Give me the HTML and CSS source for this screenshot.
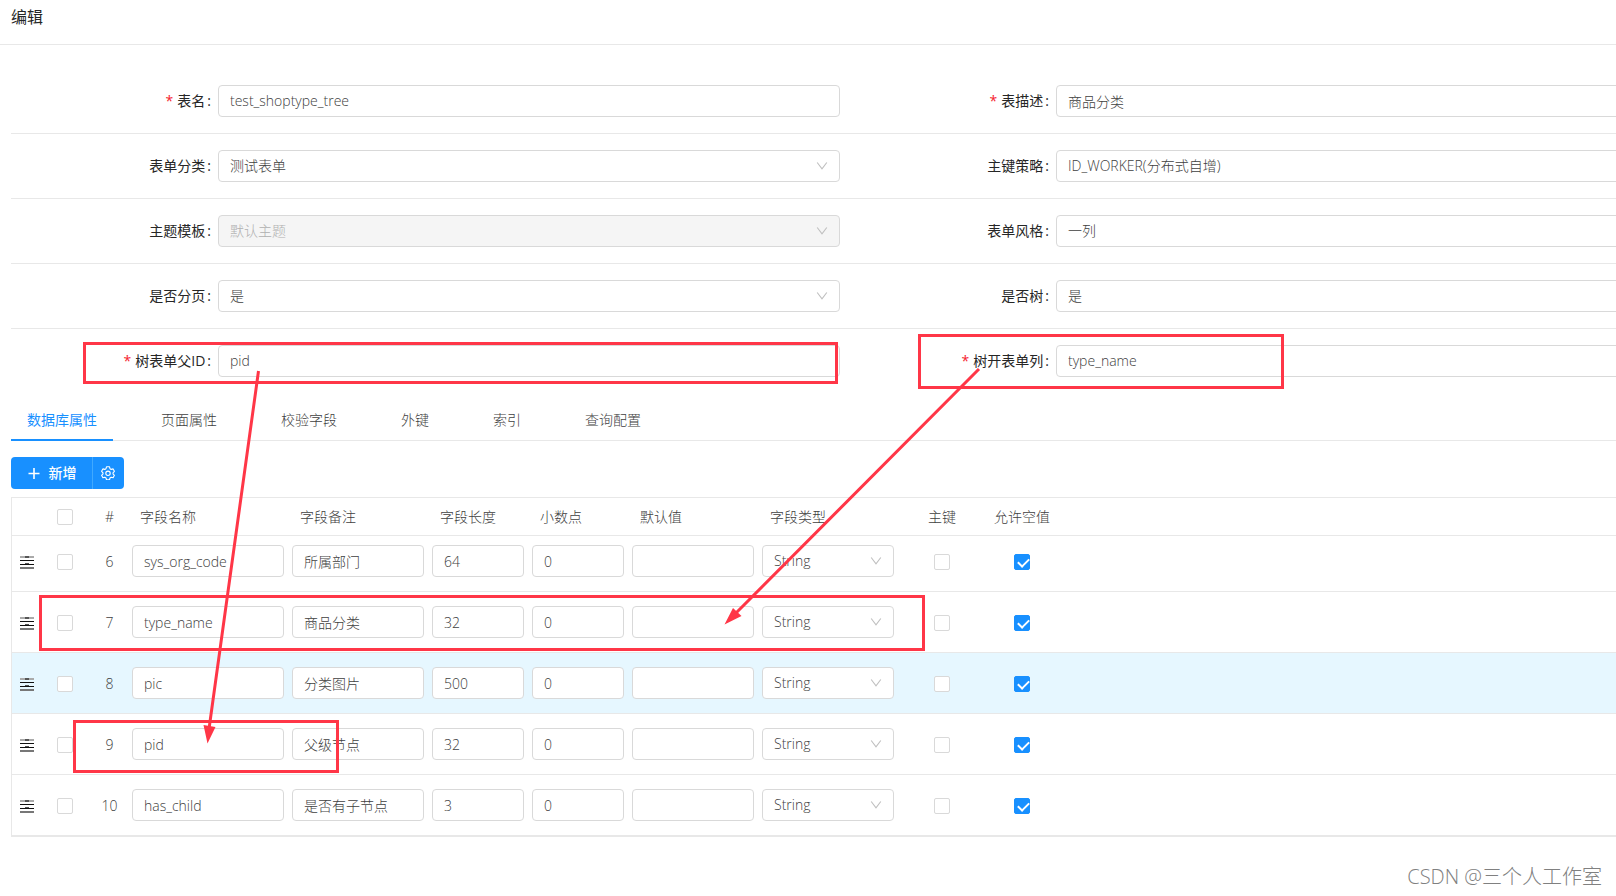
FILE: index.html
```html
<!DOCTYPE html>
<html lang="zh-CN">
<head>
<meta charset="utf-8">
<title>编辑</title>
<link rel="stylesheet" href="styles.css">
</head>
<body>
<svg class="sprite" aria-hidden="true">
  <symbol id="down" viewBox="0 0 12 12"><path d="M1.200 2.500 6 8.800 10.800 2.500" fill="none" stroke="currentColor" stroke-width="1.100"/></symbol>
  <symbol id="drag" viewBox="0 0 14 14"><path d="M0 2h14" stroke="#aaa" stroke-width="2"/><path d="M5 2h4M5 9h4" stroke="#555" stroke-width="2"/><path d="M0 5.500h14M0 9.500h14" stroke="#111"/><path d="M0 13h14" stroke="#777" stroke-width="2"/></symbol>
</svg>
<div class="page">
  <header class="title-bar"><h1 class="title">编辑</h1></header>

  <form class="form">
    <div class="form-row">
      <div class="field"><label class="label required" for="f1">表名</label><input class="control" id="f1" value="test_shoptype_tree"></div>
      <div class="field"><label class="label required" for="f2">表描述</label><input class="control" id="f2" value="商品分类"></div>
    </div>
    <div class="form-row">
      <div class="field"><label class="label" for="f3">表单分类</label><span class="select"><select class="control" id="f3"><option>测试表单</option></select><svg class="chevron"><use href="#down"/></svg></span></div>
      <div class="field"><label class="label" for="f4">主键策略</label><span class="select"><select class="control" id="f4"><option>ID_WORKER(分布式自增)</option></select><svg class="chevron"><use href="#down"/></svg></span></div>
    </div>
    <div class="form-row">
      <div class="field"><label class="label" for="f5">主题模板</label><span class="select"><select class="control" id="f5" disabled><option>默认主题</option></select><svg class="chevron"><use href="#down"/></svg></span></div>
      <div class="field"><label class="label" for="f6">表单风格</label><span class="select"><select class="control" id="f6"><option>一列</option></select><svg class="chevron"><use href="#down"/></svg></span></div>
    </div>
    <div class="form-row">
      <div class="field"><label class="label" for="f7">是否分页</label><span class="select"><select class="control" id="f7"><option>是</option></select><svg class="chevron"><use href="#down"/></svg></span></div>
      <div class="field"><label class="label" for="f8">是否树</label><span class="select"><select class="control" id="f8"><option>是</option></select><svg class="chevron"><use href="#down"/></svg></span></div>
    </div>
    <div class="form-row">
      <div class="field"><label class="label required" for="f9">树表单父ID</label><input class="control" id="f9" value="pid"></div>
      <div class="field"><label class="label required" for="f10">树开表单列</label><input class="control" id="f10" value="type_name"></div>
    </div>
  </form>

  <nav class="tabs" role="tablist">
    <button class="tab active" role="tab" aria-selected="true">数据库属性</button>
    <button class="tab" role="tab">页面属性</button>
    <button class="tab" role="tab">校验字段</button>
    <button class="tab" role="tab">外键</button>
    <button class="tab" role="tab">索引</button>
    <button class="tab" role="tab">查询配置</button>
  </nav>

  <div class="toolbar">
    <button class="btn add"><svg class="icon" viewBox="0 0 14 14"><path d="M7 2v11M1.500 7.500h11" stroke="currentColor" stroke-width="1.600"/></svg>新增</button>
    <button class="btn gear" aria-label="设置"><svg class="icon" viewBox="0 0 14 14" fill="none" stroke="currentColor" stroke-width="1.100" stroke-linejoin="round"><path d="M5.500.800h3l.5 1.900 1.200.7 1.900-.5 1.300 2.400-1.400 1.500v1l1.400 1.500-1.300 2.400-1.900-.5-1.200.7-.5 1.900h-3L5 11.900l-1.200-.7-1.900.5L.6 9.300 2 7.800v-1L.6 5.300l1.300-2.400 1.900.5L5 2.700z"/><circle cx="7" cy="7.300" r="2.200"/></svg></button>
  </div>

  <table class="grid">
    <colgroup><col class="c-drag"><col class="c-check"><col class="c-num"><col class="c-name"><col class="c-remark"><col class="c-len"><col class="c-len"><col class="c-default"><col class="c-remark"><col class="c-pk"><col class="c-null"><col></colgroup>
    <thead>
      <tr><th></th><th class="mid"><input type="checkbox" class="box" aria-label="全选"></th><th class="num">#</th><th>字段名称</th><th>字段备注</th><th>字段长度</th><th>小数点</th><th>默认值</th><th>字段类型</th><th class="mid">主键</th><th class="mid">允许空值</th><th></th></tr>
    </thead>
    <tbody>
      <tr class="first">
        <td class="mid"><svg class="drag"><use href="#drag"/></svg></td><td class="mid"><input type="checkbox" class="box" aria-label="选择"></td><td class="num">6</td>
        <td><input class="control" aria-label="字段名称" value="sys_org_code"></td><td><input class="control" aria-label="字段备注" value="所属部门"></td><td><input class="control" aria-label="字段长度" value="64"></td><td><input class="control" aria-label="小数点" value="0"></td><td><input class="control" aria-label="默认值"></td>
        <td><span class="select"><select class="control" aria-label="字段类型"><option>String</option></select><svg class="chevron"><use href="#down"/></svg></span></td>
        <td class="mid"><input type="checkbox" class="box" aria-label="主键"></td><td class="mid"><input type="checkbox" class="box" aria-label="允许空值" checked></td><td></td>
      </tr>
      <tr>
        <td class="mid"><svg class="drag"><use href="#drag"/></svg></td><td class="mid"><input type="checkbox" class="box" aria-label="选择"></td><td class="num">7</td>
        <td><input class="control" aria-label="字段名称" value="type_name"></td><td><input class="control" aria-label="字段备注" value="商品分类"></td><td><input class="control" aria-label="字段长度" value="32"></td><td><input class="control" aria-label="小数点" value="0"></td><td><input class="control" aria-label="默认值"></td>
        <td><span class="select"><select class="control" aria-label="字段类型"><option>String</option></select><svg class="chevron"><use href="#down"/></svg></span></td>
        <td class="mid"><input type="checkbox" class="box" aria-label="主键"></td><td class="mid"><input type="checkbox" class="box" aria-label="允许空值" checked></td><td></td>
      </tr>
      <tr class="hover">
        <td class="mid"><svg class="drag"><use href="#drag"/></svg></td><td class="mid"><input type="checkbox" class="box" aria-label="选择"></td><td class="num">8</td>
        <td><input class="control" aria-label="字段名称" value="pic"></td><td><input class="control" aria-label="字段备注" value="分类图片"></td><td><input class="control" aria-label="字段长度" value="500"></td><td><input class="control" aria-label="小数点" value="0"></td><td><input class="control" aria-label="默认值"></td>
        <td><span class="select"><select class="control" aria-label="字段类型"><option>String</option></select><svg class="chevron"><use href="#down"/></svg></span></td>
        <td class="mid"><input type="checkbox" class="box" aria-label="主键"></td><td class="mid"><input type="checkbox" class="box" aria-label="允许空值" checked></td><td></td>
      </tr>
      <tr>
        <td class="mid"><svg class="drag"><use href="#drag"/></svg></td><td class="mid"><input type="checkbox" class="box" aria-label="选择"></td><td class="num">9</td>
        <td><input class="control" aria-label="字段名称" value="pid"></td><td><input class="control" aria-label="字段备注" value="父级节点"></td><td><input class="control" aria-label="字段长度" value="32"></td><td><input class="control" aria-label="小数点" value="0"></td><td><input class="control" aria-label="默认值"></td>
        <td><span class="select"><select class="control" aria-label="字段类型"><option>String</option></select><svg class="chevron"><use href="#down"/></svg></span></td>
        <td class="mid"><input type="checkbox" class="box" aria-label="主键"></td><td class="mid"><input type="checkbox" class="box" aria-label="允许空值" checked></td><td></td>
      </tr>
      <tr>
        <td class="mid"><svg class="drag"><use href="#drag"/></svg></td><td class="mid"><input type="checkbox" class="box" aria-label="选择"></td><td class="num">10</td>
        <td><input class="control" aria-label="字段名称" value="has_child"></td><td><input class="control" aria-label="字段备注" value="是否有子节点"></td><td><input class="control" aria-label="字段长度" value="3"></td><td><input class="control" aria-label="小数点" value="0"></td><td><input class="control" aria-label="默认值"></td>
        <td><span class="select"><select class="control" aria-label="字段类型"><option>String</option></select><svg class="chevron"><use href="#down"/></svg></span></td>
        <td class="mid"><input type="checkbox" class="box" aria-label="主键"></td><td class="mid"><input type="checkbox" class="box" aria-label="允许空值" checked></td><td></td>
      </tr>
    </tbody>
  </table>

  <footer class="watermark">CSDN @三个人工作室</footer>

  <svg class="marks" width="1616" height="896" aria-hidden="true">
    <g fill="none" stroke="#ff3647" stroke-width="3">
      <rect x="84.500" y="343.500" width="752" height="39"/>
      <rect x="919.500" y="335.500" width="363" height="52"/>
      <rect x="40.500" y="596.500" width="883" height="53"/>
      <rect x="74.500" y="721.500" width="263" height="50"/>
      <path d="M258.500 371 209 729M979 369 736 613"/>
    </g>
    <path fill="#ff3647" d="M203.500 725 215.500 727 207.500 743.500zM733 608 741.500 616 724.500 624.500z"/>
  </svg>
</div>
</body>
</html>
```
FILE: styles.css
```css
* { box-sizing: border-box; }

body {
  margin: 0;
  background: #fff;
  color: #404040;
  font: 300 14px/20px "Open Sans", "Noto Sans CJK SC", sans-serif;
  overflow-x: hidden;
}

input, select, button { font: inherit; color: inherit; }

.sprite { position: absolute; width: 0; height: 0; }

.page { position: relative; min-height: 100vh; overflow: hidden; }

.title-bar { height: 45px; padding: 5px 11px; border-bottom: 1px solid #e8e8e8; }
.title { margin: 0; font-size: 16px; line-height: 24px; font-weight: 400; color: #262626; }

/* The form runs past the right edge of the window */
.form { margin: 24px -71px 0 11px; }
.form-row { display: grid; grid-template-columns: 1fr 1fr; padding: 16px 0; border-bottom: 1px solid #e8e8e8; }
.form-row:last-child { border-bottom: 0; }
.field { display: flex; align-items: center; padding-right: 9px; }
.label { width: 207px; padding-right: 7px; text-align: right; color: #262626; font-weight: 400; }
.label::after { content: ":"; margin-left: 2px; }
.required::before { content: "*"; margin-right: 4px; color: #f5222d; }

.control {
  display: block;
  flex: 1;
  width: 100%;
  height: 32px;
  margin: 0;
  padding: 0 11px;
  border: 1px solid #d9d9d9;
  border-radius: 4px;
  background: #fff;
  appearance: none;
}
.control:disabled { background: #f5f5f5; color: #b0b0b0; opacity: 1; }
.form .control { padding-bottom: 1px; }
.select { position: relative; display: block; flex: 1; }
.chevron { position: absolute; right: 12px; top: 10px; width: 12px; height: 12px; color: #bfbfbf; pointer-events: none; }

.tabs { display: flex; gap: 32px; margin-left: 11px; border-bottom: 1px solid #e8e8e8; height: 48px; }
.tab { height: 48px; padding: 8px 16px 0; border: 0; border-bottom: 2px solid transparent; background: none; }
.active { color: #1890ff; border-bottom-color: #1890ff; font-weight: 400; }

.toolbar { display: flex; margin: 16px 0 8px 11px; }
.btn { display: flex; align-items: center; justify-content: center; height: 32px; padding: 0; border: 0; background: #1890ff; color: #fff; }
.add { width: 82px; gap: 8px; border-radius: 4px 0 0 4px; border-right: 1px solid #40a9ff; font-weight: 500; }
.gear { width: 31px; padding-right: 2px; border-radius: 0 4px 4px 0; }
.icon { width: 14px; height: 14px; }

.grid {
  width: calc(100% + 60px);
  margin-left: 11px;
  table-layout: fixed;
  border-collapse: separate;
  border-spacing: 0;
  border: 1px solid #e8e8e8;
}
.c-drag { width: 32px; }
.c-check { width: 42px; }
.c-num { width: 42px; }
.c-name { width: 160px; }
.c-remark { width: 140px; }
.c-len { width: 100px; }
.c-default { width: 130px; }
.c-pk { width: 88px; }
.c-null { width: 72px; }
.grid th { height: 38px; padding: 0 0 0 12px; border-bottom: 1px solid #e8e8e8; font-weight: inherit; text-align: left; white-space: nowrap; }
.grid td { height: 61px; padding: 14px 4px; border-bottom: 1px solid #e8e8e8; }
.first td { height: 56px; padding: 9px 4px 14px; }
.hover td { background: #e6f7ff; }
.grid .mid { padding-left: 0; padding-right: 0; text-align: center; }
.grid .num { padding-left: 5px; padding-right: 0; text-align: center; }
.grid td.mid, .grid td.num { padding-bottom: 12px; }
.drag { display: block; width: 14px; height: 14px; margin: 0 8px; }

.box {
  display: block;
  width: 16px;
  height: 16px;
  margin: 0 auto;
  border: 1px solid #d9d9d9;
  border-radius: 2px;
  background: #fff;
  appearance: none;
}
.box:checked { border-color: #1890ff; background: #1890ff; }
.box:checked::after {
  content: "";
  display: block;
  width: 5px;
  height: 9px;
  margin: 1px 0 0 5px;
  border: solid #fff;
  border-width: 0 2px 2px 0;
  transform: rotate(45deg);
}

.watermark { position: absolute; right: 14px; bottom: 5px; color: #808080; font-size: 20px; line-height: 28px; }
.marks { position: absolute; left: 0; top: 0; pointer-events: none; }
```
